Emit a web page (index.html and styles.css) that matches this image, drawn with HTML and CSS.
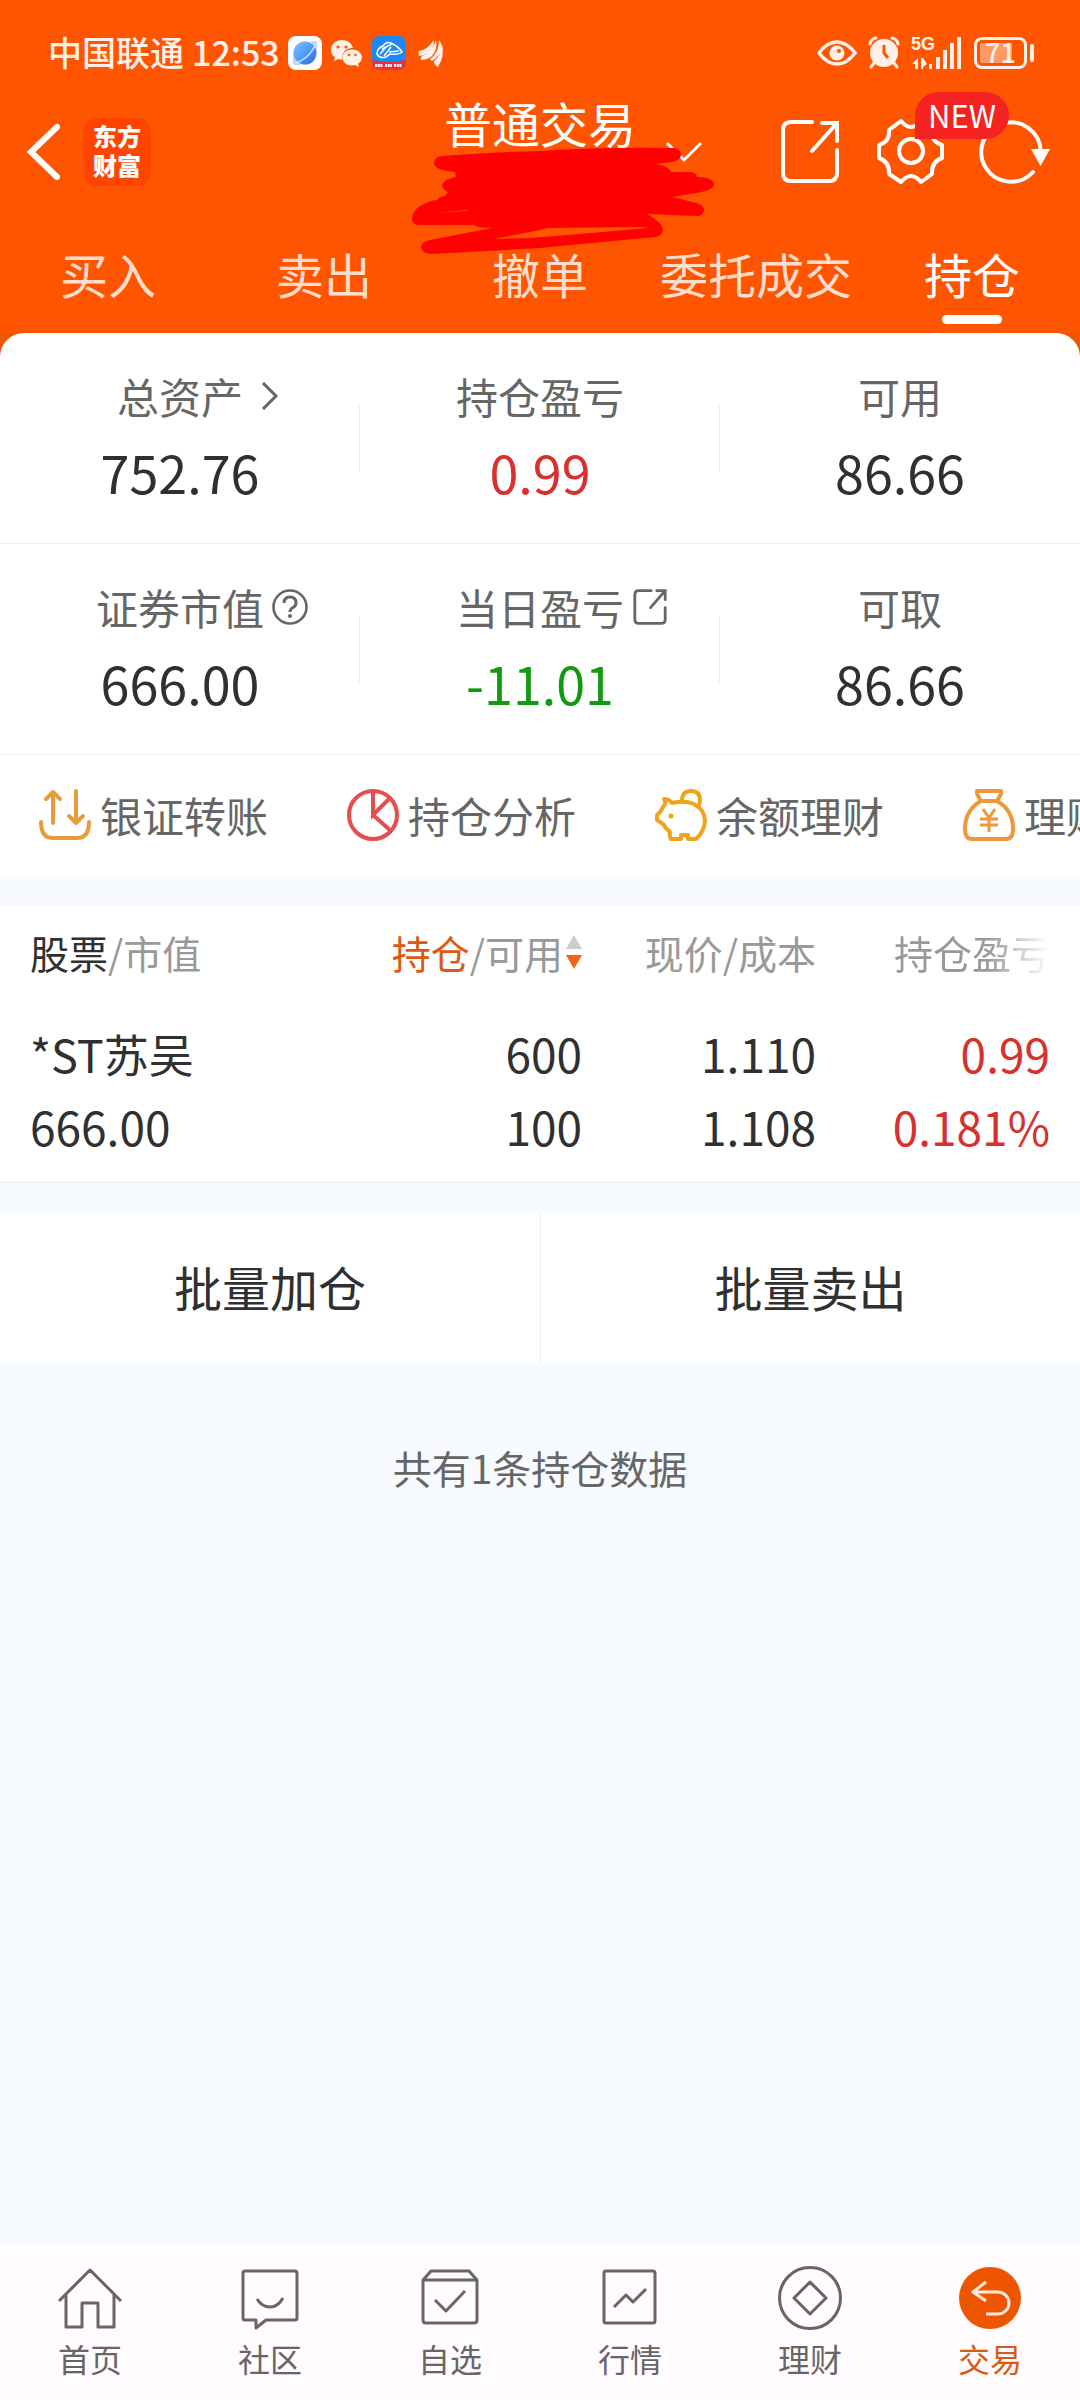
FILE: index.html
```html
<!DOCTYPE html>
<html lang="zh-CN">
<head>
<meta charset="utf-8">
<meta name="viewport" content="width=device-width, initial-scale=1">
<title>普通交易 - 持仓</title>
<link rel="stylesheet" href="styles.css">
</head>
<body>
<header class="top">
  <div class="status">
    <span class="status-text">中国联通</span>
    <span class="status-text">12:53</span>
    <svg width="34" height="34" viewBox="0 0 34 34" aria-hidden="true">
      <defs><linearGradient id="planet" x1="0" y1="0" x2="1" y2="1"><stop offset="0" stop-color="#7cc4ff"/><stop offset=".5" stop-color="#4f9cfa"/><stop offset="1" stop-color="#2a5fe4"/></linearGradient></defs>
      <rect width="34" height="34" rx="8" fill="#fff"/>
      <path d="M5 18V27Q5 29 7 29H12ZM22 5H27Q29 5 29 8V14Z" fill="#c3d2fa"/>
      <circle cx="17" cy="17" r="11.500" fill="url(#planet)"/>
      <path d="M7 27Q20 24 28 8" fill="none" stroke="#cfe3ff" stroke-width="1.500"/>
    </svg>
    <svg width="34" height="34" viewBox="0 0 34 34" aria-hidden="true">
      <path d="M12 4C5.500 4 1 8.500 1 14c0 3 1.500 5.500 4 7.500L4 25l4.500-2c1.500.5 2.500.6 4 .6C11 17 16 11.500 23 12 22 7.500 17.500 4 12 4Z" fill="#fff0ea"/>
      <path d="M22 13.500c-5.500 0-9.500 3.500-9.500 8s4 8 9.500 8c1.200 0 2.200-.2 3.300-.5L29 31l-1-3.200c2.500-1.600 4-3.700 4-6.300 0-4.500-4.500-8-10-8Z" fill="#fff0ea"/>
      <g fill="#ff5500"><circle cx="8" cy="11" r="1.600"/><circle cx="16" cy="11" r="1.600"/><circle cx="19" cy="19" r="1.300"/><circle cx="25.500" cy="19" r="1.300"/></g>
    </svg>
    <svg width="34" height="34" viewBox="0 0 34 34" aria-hidden="true">
      <path d="M0 25V8Q0 0 8 0H26Q34 0 34 8V25Z" fill="#1e88f5"/>
      <path d="M0 24Q17 27 34 24V26Q34 34 26 34H8Q0 34 0 26Z" fill="#e8323c"/>
      <path d="M5 18Q5 12 11 10Q14 5 19 7Q27 11 30 16Q27 19 18 18L14 21Q8 23 5 18Z" fill="none" stroke="#fff" stroke-width="1.500"/>
      <path d="M8 18L15 10M12 20L19 11M10 13L20 8M17 16L27 15" stroke="#fff" stroke-width="1.500"/>
      <path d="M3 29.500H11M13 29.500H20M22 29.500H30" stroke="#fff" stroke-width="3" stroke-dasharray="2 .7"/>
    </svg>
    <svg width="34" height="34" viewBox="0 0 34 34" fill="#fff0ea" aria-hidden="true">
      <path d="M5 20Q4 17 5 15Q12 15 20 4Q20 14 12 18Q8 20 5 20ZM7 24Q6 22 8 20Q18 17 22 4Q24 13 18 20Q13 24 7 24ZM25 4Q30 10 26 17Q23 22 18 25Q15 23 16 23Q25 17 25 4ZM28 8Q31 20 24 31Q20 29 20 25Q27 20 28 8Z"/>
    </svg>
    <div class="status-right">
      <svg width="40" height="34" viewBox="0 0 40 34" fill="none" aria-hidden="true"><path d="M2 17Q10 6 20 6T38 17Q30 28 20 28T2 17Z" stroke="#fff0ea" stroke-width="3.500"/><circle cx="20" cy="17" r="7.500" fill="#fff0ea"/><circle cx="22" cy="15" r="2" fill="#ff5500"/></svg>
      <svg width="32" height="34" viewBox="0 0 32 34" fill="none" stroke="#fff0ea" stroke-width="3" aria-hidden="true"><circle cx="16" cy="17" r="14" fill="#fff0ea" stroke="none"/><path d="M2 8Q3 3 8 2M30 8Q29 3 24 2M6 27L3 31M26 27L29 31" stroke-linecap="round"/><path d="M16 9V17L20 22" stroke="#ff5500"/></svg>
      <span class="signal">
        <span class="net">5G</span>
        <svg width="52" height="34" viewBox="0 0 52 34" aria-hidden="true"><g fill="#fff0ea"><path d="M1 28L7 22V33H4V28ZM10 22H12L16 28L12 31V33H10ZM18 28H21V33H18ZM25 21H29V33H25ZM32 14H36V33H32ZM39 7H43V33H39ZM46 1H50V33H46Z"/></g></svg>
      </span>
      <span class="battery"><span class="battery-body">71</span><span class="battery-tip"></span></span>
    </div>
  </div>

  <div class="titlebar">
    <div class="title-left">
      <button class="icon-btn" aria-label="返回"><svg width="36" height="64" viewBox="0 0 36 64" fill="none"><path d="M31 7L5 32L31 57" stroke="#fff" stroke-width="6" stroke-linecap="round"/></svg></button>
      <span class="logo">东方<br>财富</span>
    </div>
    <h1 class="title">普通交易</h1>
    <div class="title-right">
      <button class="icon-btn" aria-label="切换账户"><svg width="40" height="24" viewBox="0 0 40 24" fill="none"><path d="M3 3L20 20L37 3" stroke="#fff" stroke-width="3"/></svg></button>
      <div class="actions">
        <button class="icon-btn" aria-label="分享"><svg width="64" height="68" viewBox="0 -2 64 68" fill="none" stroke="#fff" stroke-width="4" stroke-linecap="round"><path d="M34 2H13Q5 2 5 10V53Q5 61 13 61H51Q59 61 59 53V30M44 3H59V21M59 3L34 31"/></svg></button>
        <button class="icon-btn" aria-label="设置"><svg width="68" height="68" viewBox="0 0 68 68" fill="none" stroke="#fff" stroke-width="4" stroke-linejoin="round"><path d="M3 27V40Q14 44 13 56L25 64Q35 52 45 64L56 56Q55 44 66 40V27Q55 24 56 12L45 3Q35 15 25 3L13 12Q14 24 3 27Z"/><circle cx="35" cy="33" r="12"/></svg><span class="badge">NEW</span></button>
        <button class="icon-btn" aria-label="刷新"><svg width="72" height="68" viewBox="0 0 72 68" fill="none"><path d="M62.700 33A29.700 29.700 0 1 0 55 54" stroke="#fff" stroke-width="4" stroke-linecap="round"/><path d="M53 31H72L62.500 48Z" fill="#fff"/></svg></button>
      </div>
    </div>
    <svg class="scribble" width="304" height="110" viewBox="411 147 304 110" aria-hidden="true">
      <path fill="#f00" fill-rule="evenodd" d="M434 164Q434 158 442 157Q490 153 540 152Q600 148 674 149Q681 150 681 156Q680 162 672 163L655 165Q668 166 671 173L691 173Q697 174 697 178Q714 178 714 186Q713 192 690 195L672 198L697 204Q704 207 704 211Q703 217 697 217L647 215Q663 224 663 231Q662 237 655 238L540 249L431 255Q421 254 421 248Q421 243 430 241L492 229Q477 229 474 226L418 226Q412 225 412 219Q413 210 424 205Q432 201 437 201Q440 197 445 197L448 193Q442 190 442 186Q444 180 456 178L455 173Q434 171 434 164ZM494 240L540 231L547 229L643 228L648 229L580 235L530 239ZM434 214L467 211L468 212Z"/>
    </svg>
  </div>

  <nav class="tabs" aria-label="交易">
    <a href="#buy">买入</a>
    <a href="#sell">卖出</a>
    <a href="#cancel">撤单</a>
    <a href="#orders">委托成交</a>
    <a href="#positions" class="on" aria-current="page">持仓</a>
  </nav>
</header>

<main class="main">
  <div class="card-back">
    <section class="card">
      <div class="stats">
        <div class="stat"><div class="label"><span>总资产</span><svg width="36" height="36" viewBox="0 0 36 36" fill="none"><path d="M12 5L25 18L12 31" stroke="#666" stroke-width="3"/></svg></div><div class="value">752.76</div></div>
        <div class="stat"><div class="label"><span>持仓盈亏</span></div><div class="value up">0.99</div></div>
        <div class="stat"><div class="label"><span>可用</span></div><div class="value">86.66</div></div>
      </div>
      <div class="stats">
        <div class="stat"><div class="label"><span>证券市值</span><svg width="36" height="36" viewBox="0 0 36 36" fill="none" stroke="#666" stroke-width="2.600"><circle cx="18" cy="18" r="16.500"/><path d="M12 14Q12 8 18 8T24 14Q24 17 21 18.500Q18 20 18 23" stroke-width="3"/><circle cx="18" cy="27" r="2" fill="#666" stroke="none"/></svg></div><div class="value">666.00</div></div>
        <div class="stat"><div class="label"><span>当日盈亏</span><svg width="36" height="36" viewBox="0 0 64 64" fill="none" stroke="#666" stroke-width="5" stroke-linecap="round"><path d="M34 3H12Q5 3 5 10V54Q5 61 12 61H52Q59 61 59 54V33M44 3H59V19M59 3L33 33"/></svg></div><div class="value down">-11.01</div></div>
        <div class="stat"><div class="label"><span>可取</span></div><div class="value">86.66</div></div>
      </div>
      <div class="shortcuts">
        <a href="#transfer"><svg width="52" height="52" viewBox="0 0 52 52" fill="none" stroke="#e79c3c" stroke-width="4" stroke-linecap="round" stroke-linejoin="round"><path d="M14 34V3M7 10L14 3L21 10M37 2V34M30 27L37 34L44 27M2 33Q2 49 14 49H38Q50 49 50 33"/></svg>银证转账</a>
        <a href="#analysis"><svg width="52" height="52" viewBox="0 0 52 52" fill="none" stroke="#e84c4c" stroke-width="4"><circle cx="26" cy="26" r="24"/><path d="M26 2V26L43 9M26 26L44 42"/></svg>持仓分析</a>
        <a href="#balance"><svg width="52" height="52" viewBox="0 0 52 52" fill="none" stroke="#f0a41c" stroke-width="4" stroke-linejoin="round"><path d="M9 10Q14 10 17 14Q30 11 39 15Q50 21 50 32Q49 43 41 50H33V46H26V50H16Q14 47 15 43Q10 39 8 35L2 31V26Q6 23 8 18Q12 14 9 10ZM27 12Q27 2 36 2T45 11Q45 15 43 18"/><circle cx="16" cy="27" r="2.500" fill="#f0a41c" stroke="none"/></svg>余额理财</a>
        <a href="#wealth"><svg width="52" height="52" viewBox="0 0 52 52" fill="none" stroke="#ee983c" stroke-width="4" stroke-linejoin="round"><path d="M14 2H38V5L34 12H18L14 5ZM18 12Q2 21 2 40Q2 50 9 50H43Q50 50 50 40Q50 21 34 12"/><path d="M20 20L26 29L32 20M17 30H35M17 36H35M26 29V43" stroke-width="3"/></svg>理财</a>
      </div>
    </section>
  </div>

  <section class="holdings">
    <table>
      <colgroup><col><col class="num"><col class="num"><col class="num"></colgroup>
      <thead>
        <tr>
          <th scope="col"><b>股票</b>/市值</th>
          <th scope="col"><button class="sort"><span><b>持仓</b>/可用</span><svg width="16" height="36" viewBox="0 0 16 36"><path d="M8 1L16 15H0Z" fill="#ccc"/><path d="M0 21H16L8 35Z" fill="#f26513"/></svg></button></th>
          <th scope="col">现价/成本</th>
          <th scope="col"><span class="fade">持仓盈亏</span></th>
        </tr>
      </thead>
      <tbody>
        <tr>
          <th scope="row"><span class="name">*ST苏吴</span><br>666.00</th>
          <td>600<br>100</td>
          <td>1.110<br>1.108</td>
          <td class="up">0.99<br>0.181%</td>
        </tr>
      </tbody>
    </table>
  </section>

  <div class="batch">
    <button>批量加仓</button>
    <button>批量卖出</button>
  </div>
  <p class="count">共有1条持仓数据</p>
</main>

<nav class="bottom" aria-label="主导航">
  <a href="#home"><svg width="64" height="64" viewBox="0 0 64 64"><path d="M1 35L32 4L63 35M8 29V61H24V37H40V61H56V29"/></svg>首页</a>
  <a href="#community"><svg width="64" height="64" viewBox="0 0 64 64"><path d="M7 5H57Q59 5 59 7V52Q59 54 57 54H28L18 62V54H7Q5 54 5 52V7Q5 5 7 5Z"/><path d="M19 33Q24 41 32 41T45 32"/></svg>社区</a>
  <a href="#watch"><svg width="64" height="64" viewBox="0 0 64 64"><path d="M5 14L13 5H51L59 14V54Q59 57 56 57H8Q5 57 5 54ZM5 14H59M17 34L28 45L47 25"/></svg>自选</a>
  <a href="#market"><svg width="64" height="64" viewBox="0 0 64 64"><rect x="6" y="5" width="51" height="52" rx="2"/><path d="M16 41L28 29L35 36L48 23"/></svg>行情</a>
  <a href="#finance"><svg width="64" height="64" viewBox="0 0 64 64"><circle cx="32" cy="32" r="30.500"/><path d="M32 16L48 32L32 48L16 32Z"/></svg>理财</a>
  <a href="#trade" class="on" aria-current="page"><svg width="64" height="64" viewBox="0 0 64 64"><circle cx="32" cy="32" r="31" fill="#ee5500" stroke="none"/><path d="M28 16L15 26L28 35M15 26H40A11 11 0 0 1 40 48H28" stroke="#ffeadc"/></svg>交易</a>
</nav>
</body>
</html>
```

FILE: styles.css
```css
* { box-sizing: border-box; }

body {
  margin: 0;
  min-height: 100vh;
  display: flex;
  flex-direction: column;
  overflow-x: hidden;
  background: #f7faff;
  color: #303030;
  font-family: "Noto Sans CJK SC", "Noto Sans", sans-serif;
}

a { color: inherit; text-decoration: none; }
button { padding: 0; border: 0; background: none; color: inherit; font: inherit; }
svg { display: block; flex: none; }

/* Header */
.top { background: #ff5500; color: #fff; }

.status {
  display: flex;
  align-items: center;
  gap: 8px;
  padding: 36px 46px 26px 48px;
  color: #fff0ea;
}
.status-text { padding-bottom: 2px; font-size: 34px; font-weight: 500; line-height: 32px; }
.status-right { display: flex; align-items: center; gap: 11px; margin-left: auto; }
.signal { position: relative; display: block; }
.net {
  position: absolute;
  left: 0;
  top: 0;
  font: 700 18px/16px "Liberation Sans", sans-serif;
}
.battery { display: flex; align-items: center; gap: 3px; }
.battery-body {
  width: 53px;
  height: 32px;
  border: 3px solid #fff0ea;
  border-radius: 8px;
  background: linear-gradient(90deg, #ff9966 78%, transparent 78%) content-box;
  padding: 3px;
  font-size: 27px;
  font-weight: 500;
  line-height: 18px;
  text-align: center;
}
.battery-tip { width: 4px; height: 18px; border-radius: 2px; background: #fff0ea; }

.titlebar {
  position: relative;
  display: grid;
  grid-template-columns: 1fr auto 1fr;
  height: 112px;
}
.title-left { display: flex; align-items: center; gap: 21px; padding-left: 26px; }
.icon-btn { position: relative; display: block; }
.logo {
  width: 68px;
  height: 68px;
  padding: 3px 0;
  border-radius: 14px;
  background: #ff4400;
  font-size: 24px;
  font-weight: 900;
  line-height: 29px;
  text-align: center;
}
.title { margin: 0; font-size: 48px; font-weight: 400; line-height: 52px; }
.title-right { display: flex; align-items: center; padding: 0 30px 0 28px; }
.actions { display: flex; gap: 34px; margin-left: auto; }
.badge {
  position: absolute;
  left: 39px;
  top: -26px;
  z-index: 1;
  width: 94px;
  height: 47px;
  border-radius: 24px 24px 24px 0;
  background: #f52222;
  font-size: 31px;
  line-height: 45px;
  text-align: center;
}
.scribble { position: absolute; left: 50%; top: 50px; margin-left: -129px; }

.tabs { display: grid; grid-template-columns: repeat(5, 1fr); padding: 29px 0 9px; }
.tabs a {
  display: flex;
  flex-direction: column;
  align-items: center;
  gap: 6px;
  color: #ffddcc;
  font-size: 48px;
  line-height: 72px;
  white-space: nowrap;
}
.tabs a::after { content: ""; width: 60px; height: 9px; border-radius: 5px; }
.tabs .on { color: #fff; }
.tabs .on::after { background: #fff; }

/* Account summary */
.main { flex: 1; }
.card-back { background: linear-gradient(#eb5505 24px, #fff 24px); }
.card { border-radius: 24px 24px 0 0; background: #fff; overflow: hidden; }
.stats {
  display: grid;
  grid-template-columns: repeat(3, 1fr);
  padding: 33px 0 37px;
  border-bottom: 1px solid #ededed;
}
.stat { position: relative; }
.stat + .stat::before {
  content: "";
  position: absolute;
  left: -1px;
  top: 39px;
  height: 67px;
  border-left: 1px solid #ededed;
}
.label {
  display: grid;
  grid-template-columns: 1fr auto 1fr;
  align-items: center;
  column-gap: 8px;
  color: #666;
  font-size: 42px;
  line-height: 60px;
}
.label span { grid-column: 2; }
.value { padding-top: 12px; font-size: 52px; line-height: 68px; text-align: center; }
.up { color: #d9302e; }
.down { color: #109a10; }

.shortcuts { display: flex; gap: 79px; padding: 0 39px 2px; overflow: hidden; }
.shortcuts a {
  display: flex;
  flex: none;
  align-items: center;
  gap: 9px;
  color: #666;
  font-size: 42px;
  line-height: 119px;
}

/* Holdings */
.holdings { margin: 30px 0; padding: 0 30px; border-bottom: 1px solid #ededed; background: #fff; }
.holdings table { width: 100%; border-collapse: collapse; table-layout: fixed; }
.num { width: 234px; }
.holdings th, .holdings td { padding: 0; font-weight: 400; text-align: right; white-space: nowrap; }
.holdings th:first-child { text-align: left; }
.holdings thead th { color: #999; font-size: 39px; line-height: 92px; }
.holdings b { color: #303030; font-weight: 400; }
.sort { display: flex; justify-content: flex-end; align-items: center; gap: 3px; width: 100%; }
.sort b { color: #dc5a10; }
.fade { -webkit-mask-image: linear-gradient(90deg, #000 60%, transparent); mask-image: linear-gradient(90deg, #000 60%, transparent); }
.holdings tbody th, .holdings tbody td { padding: 19px 0; font-size: 46px; line-height: 73px; }
.holdings .name { font-size: 45px; }

.batch { display: grid; grid-template-columns: 1fr 1fr; background: #fff; }
.batch button { padding-bottom: 3px; font-size: 48px; line-height: 147px; }
.batch button + button { border-left: 1px solid #ededed; }
.count { margin: 75px 0; color: #666; font-size: 39px; line-height: 58px; text-align: center; }

/* Bottom navigation */
.bottom {
  display: grid;
  grid-template-columns: repeat(6, 1fr);
  padding: 22px 0 18px;
  background: #fffbff;
  color: #666;
}
.bottom a {
  display: flex;
  flex-direction: column;
  align-items: center;
  gap: 4px;
  font-size: 32px;
  line-height: 48px;
}
.bottom svg { fill: none; stroke: #666; stroke-width: 3; stroke-linejoin: round; }
.bottom .on { color: #dc5a10; }
```
